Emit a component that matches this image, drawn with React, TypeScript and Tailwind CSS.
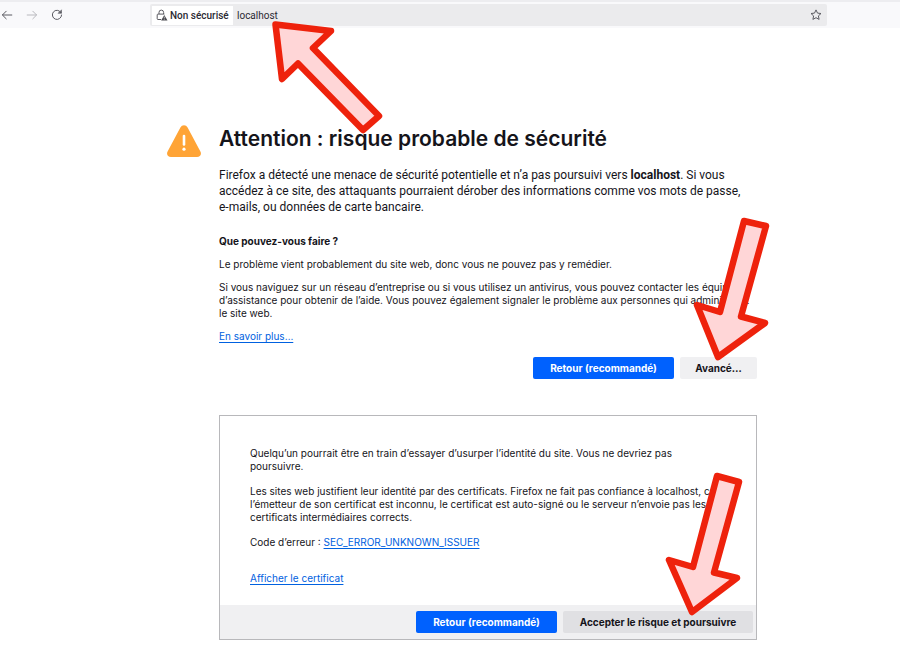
import type { ReactNode } from 'react';

type ArrowProps = {
  className: string;
  viewBox: string;
  points: string;
};

function Arrow({ className, viewBox, points }: ArrowProps) {
  return (
    <svg className={`absolute z-10 pointer-events-none ${className}`} viewBox={viewBox} aria-hidden="true">
      <polygon points={points} fill="#ffd6d7" stroke="#ee220c" strokeWidth="6.5" strokeLinejoin="round" />
    </svg>
  );
}

function PrimaryButton({ children }: { children: ReactNode }) {
  return (
    <button type="button" className="h-[22px] w-[141px] rounded-xs bg-[#0061fe] text-[10px] font-bold text-white">
      {children}
    </button>
  );
}

function Toolbar() {
  return (
    <header className="flex h-7 items-center border-t-2 border-[#ededf0] bg-[#f9f9fb] pr-[73px] text-[#5b5b62]">
      <nav className="flex w-[150px] items-center gap-[13px] pl-px">
        <button type="button" aria-label="Page précédente">
          <svg className="size-3" viewBox="0 0 12 12" fill="none" stroke="currentColor" strokeLinecap="round" strokeLinejoin="round">
            <path d="M10.8 6H1.5M5.2 2.2L1.4 6l3.8 3.8" />
          </svg>
        </button>
        <button type="button" aria-label="Page suivante" className="text-[#b9b9be]">
          <svg className="size-3" viewBox="0 0 12 12" fill="none" stroke="currentColor" strokeLinecap="round" strokeLinejoin="round">
            <path d="M1.2 6h9.3M6.8 2.2L10.6 6 6.8 9.8" />
          </svg>
        </button>
        <button type="button" aria-label="Actualiser">
          <svg className="size-3" viewBox="0 0 12 12" fill="none" stroke="currentColor" strokeLinecap="round" strokeLinejoin="round">
            <path d="M9.9 3.4A4.6 4.6 0 1 0 10.6 6" />
            <path d="M10.5 1.2v3.1H7.4z" fill="currentColor" strokeWidth="0.6" />
          </svg>
        </button>
      </nav>

      <div className="relative flex h-[22px] flex-1 items-center rounded-xs bg-[#ebebed] pr-[5px] pl-0.5 font-['Roboto',sans-serif]">
        <button type="button" className="flex h-[19px] w-[81px] items-center gap-0.5 bg-white pl-1 text-[10px] font-medium whitespace-nowrap text-[#2b2a33]">
          <svg className="size-3 shrink-0" viewBox="0 0 12 12" fill="none" stroke="#5b5b62">
            <path d="M3 5V3.4a2.3 2.3 0 0 1 4.600 0V5M5 10.500H2a.8.8 0 0 1-.8-.8V5.900A.8.8 0 0 1 2 5.100h6.400" />
            <path d="M8.300 5.900l3.200 5.600H5.100z" fill="#4a4a50" stroke="none" />
            <path d="M8.300 7.600v1.900M8.300 10.100v.7" stroke="#fff" strokeWidth="0.6" />
          </svg>
          Non sécurisé
        </button>
        <input
          type="text"
          aria-label="Adresse"
          defaultValue="localhost"
          className="min-w-0 flex-1 bg-transparent pl-1 text-[10px] text-[#2b2a33] outline-none"
        />
        <button type="button" aria-label="Ajouter aux marque-pages">
          <svg className="size-3" viewBox="0 0 12 12" fill="none" stroke="currentColor" strokeLinejoin="round">
            <path d="M6 .9l1.500 3.200 3.500.4-2.600 2.400.7 3.500L6 8.700l-3.100 1.700.7-3.500L1 4.500l3.500-.4z" />
          </svg>
        </button>
        <Arrow
          className="top-4 left-[120px] h-[116px] w-[116px]"
          viewBox="270 20 116 116"
          points="275.500,24.500 331,31 313,48 379,116 363,130 298,63.500 282,79"
        />
      </div>
    </header>
  );
}

function CertificatePanel() {
  return (
    <section className="relative mt-9 border border-[#b8b8bb] text-[10px] leading-[13px]">
      <div className="flex flex-col gap-3 px-[30px] pt-[31px] pb-5 whitespace-nowrap">
        <p>
          Quelqu’un pourrait être en train d’essayer d’usurper l’identité du site. Vous ne devriez pas
          <br />
          poursuivre.
        </p>
        <p>
          Les sites web justifient leur identité par des certificats. Firefox ne fait pas confiance à localhost, car
          <br />
          l’émetteur de son certificat est inconnu, le certificat est auto-signé ou le serveur n’envoie pas les
          <br />
          certificats intermédiaires corrects.
        </p>
        <p>
          Code d’erreur :{' '}
          <a href="#code" className="text-[#0061e0] underline underline-offset-2">SEC_ERROR_UNKNOWN_ISSUER</a>
        </p>
        <p className="pt-[11px]">
          <a href="#certificat" className="text-[#0061e0] underline underline-offset-2">Afficher le certificat</a>
        </p>
      </div>
      <div className="flex justify-end gap-1.5 bg-[#f0f0f2] py-1.5 pr-[3px]">
        <PrimaryButton>Retour (recommandé)</PrimaryButton>
        <button type="button" className="h-[22px] w-[190px] rounded-xs bg-[#e0e0e3] text-[10px] font-bold">
          Accepter le risque et poursuivre
        </button>
      </div>
      <Arrow
        className="right-3 bottom-[21px] h-[148px] w-20"
        viewBox="664 471 80 148"
        points="717,477 739,483 714,573.500 737,579 692,613 669,561 693,568"
      />
    </section>
  );
}

export default function App() {
  return (
    <div className="min-h-screen bg-white font-['Inter',sans-serif] text-[#15141a]">
      <Toolbar />

      <main className="mx-auto flex max-w-[614px] gap-[18px] pt-[97px] pl-6">
        <svg className="h-8 w-[34px] shrink-0" viewBox="0 0 34 32" aria-hidden="true">
          <path d="M13.400 2.400a4.200 4.200 0 0 1 7.200 0l12.800 24c1.500 2.800-.3 5.600-3.400 5.600H4c-3.100 0-4.900-2.800-3.400-5.600z" fill="#ffa436" />
          <path d="M17 11v8.500" stroke="#fff" strokeWidth="2.600" strokeLinecap="round" />
          <circle cx="17" cy="24.200" r="1.600" fill="#fff" />
        </svg>

        <div className="min-w-0 flex-1">
          <h1 className="text-[21px] leading-7 font-semibold whitespace-nowrap">Attention : risque probable de sécurité</h1>
          <p className="mt-3.5 font-['Roboto',sans-serif] text-[12px] leading-4 whitespace-nowrap">
            Firefox a détecté une menace de sécurité potentielle et n’a pas poursuivi vers <b>localhost</b>. Si vous
            <br />
            accédez à ce site, des attaquants pourraient dérober des informations comme vos mots de passe,
            <br />
            e-mails, ou données de carte bancaire.
          </p>

          <div className="mt-5 flex flex-col gap-2.5 text-[10px] leading-[13px] whitespace-nowrap">
            <h2 className="font-bold">Que pouvez-vous faire ?</h2>
            <p>Le problème vient probablement du site web, donc vous ne pouvez pas y remédier.</p>
            <p>
              Si vous naviguez sur un réseau d’entreprise ou si vous utilisez un antivirus, vous pouvez contacter les équipes
              <br />
              d’assistance pour obtenir de l’aide. Vous pouvez également signaler le problème aux personnes qui administrent
              <br />
              le site web.
            </p>
            <p>
              <a href="#aide" className="text-[#0061e0] underline underline-offset-2">En savoir plus…</a>
            </p>
          </div>

          <div className="relative mt-3.5 flex justify-end gap-1.5">
            <PrimaryButton>Retour (recommandé)</PrimaryButton>
            <button type="button" className="h-[22px] w-[77px] rounded-xs bg-[#f0f0f2] text-[10px] font-bold">
              Avancé…
            </button>
            <Arrow
              className="-right-4 bottom-4 h-[148px] w-[82px]"
              viewBox="691 215 82 148"
              points="744,221 766,226 741,316.500 765,323 718,357 697,305 720,312"
            />
          </div>

          <CertificatePanel />
        </div>
      </main>
    </div>
  );
}
